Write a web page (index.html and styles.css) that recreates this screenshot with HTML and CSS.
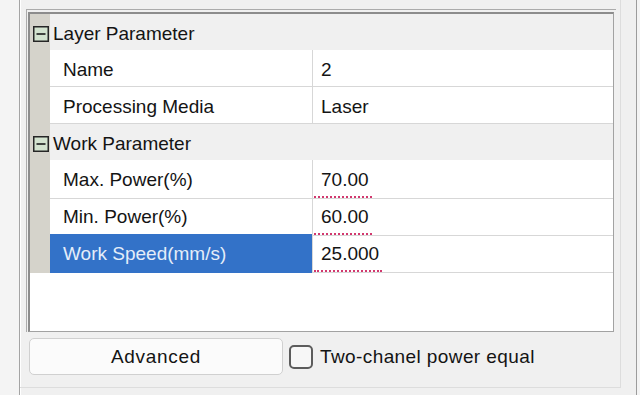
FILE: index.html
```html
<!DOCTYPE html>
<html lang="en">
<head>
    <meta charset="UTF-8">
    <title>Layer Parameter</title>
    <link rel="stylesheet" href="styles.css">
</head>
<body>
    <div class="window">
        <div class="group">
            <div class="frame">
                <div class="grid">
                    <div class="row head">
                        <span class="gutter">
                            <svg class="toggle" width="16" height="16" viewBox="0 0 16 16">
                                <rect x="0.75" y="0.75" width="14.5" height="14.5" fill="#d3e3cf" stroke="#262626" stroke-width="1.5"/>
                                <line x1="3.5" y1="8" x2="12.5" y2="8" stroke="#1a1a1a" stroke-width="1.6"/>
                            </svg>
                        </span>
                        <span class="cat">Layer Parameter</span>
                    </div>
                    <div class="row">
                        <span class="gutter"></span>
                        <span class="key">Name</span>
                        <span class="val">2</span>
                    </div>
                    <div class="row">
                        <span class="gutter"></span>
                        <span class="key">Processing Media</span>
                        <span class="val">Laser</span>
                    </div>
                    <div class="row head">
                        <span class="gutter">
                            <svg class="toggle" width="16" height="16" viewBox="0 0 16 16">
                                <rect x="0.75" y="0.75" width="14.5" height="14.5" fill="#d3e3cf" stroke="#262626" stroke-width="1.5"/>
                                <line x1="3.5" y1="8" x2="12.5" y2="8" stroke="#1a1a1a" stroke-width="1.6"/>
                            </svg>
                        </span>
                        <span class="cat">Work Parameter</span>
                    </div>
                    <div class="row">
                        <span class="gutter"></span>
                        <span class="key">Max. Power(%)</span>
                        <span class="val"><span class="spell">70.00</span></span>
                    </div>
                    <div class="row">
                        <span class="gutter"></span>
                        <span class="key">Min. Power(%)</span>
                        <span class="val"><span class="spell">60.00</span></span>
                    </div>
                    <div class="row selected">
                        <span class="gutter"></span>
                        <span class="key">Work Speed(mm/s)</span>
                        <span class="val"><span class="spell">25.000</span></span>
                    </div>
                    <div class="rest"></div>
                </div>
            </div>
            <div class="actions">
                <button class="btn" type="button">Advanced</button>
                <label class="check"><span class="box"></span>Two-chanel power equal</label>
            </div>
        </div>
    </div>
</body>
</html>
```

FILE: styles.css
```css
body {
    margin: 0;
    width: 640px;
    height: 395px;
    overflow: hidden;
    background-color: #f4f4f4;
    font-family: "Liberation Sans", Arial, sans-serif;
    font-size: 19px;
    color: #141414;
}

.window {
    margin-left: 19px;
    width: 618px;
    height: 395px;
    box-sizing: border-box;
    border-left: 1px solid #a4a4a4;
    border-right: 1px solid #9c9c9c;
    box-shadow: inset 1px 0 #ffffff;
    background-color: #f0f0f0;
}

.group {
    width: 601px;
    height: 388px;
    box-sizing: border-box;
    padding: 9px 0 0 6px;
    border-right: 1px solid #dddddd;
    border-bottom: 1px solid #dddddd;
}

.frame {
    width: 588px;
    padding: 2px 0 0 1px;
    border-top: 1px solid #ababab;
    border-left: 1px solid #ababab;
}

.grid {
    display: flex;
    flex-direction: column;
    width: 583px;
    height: 317px;
    background-color: #ffffff;
    border: 1px solid #a2a2a2;
    border-top: 2px solid #8c8c8c;
    border-left: 2px solid #8c8c8c;
}

.row {
    display: grid;
    grid-template-columns: 20px 263px 300px;
    height: 37px;
}

.row.head {
    grid-template-columns: 20px 563px;
    height: 36px;
}

.gutter {
    background-color: #d5d3cb;
}

.toggle {
    display: block;
    margin: 12px 0 0 3px;
}

.cat,
.key,
.val {
    box-sizing: border-box;
    padding-top: 3px;
    line-height: 33px;
    white-space: nowrap;
}

.cat {
    padding-left: 3px;
    background-color: #f0f0f0;
}

.key {
    padding-left: 13px;
    border-right: 1px solid #d7d7d7;
    border-bottom: 1px solid #d7d7d7;
}

.val {
    display: flex;
    padding-left: 8px;
    border-bottom: 1px solid #d7d7d7;
}

.spell {
    box-sizing: border-box;
    height: 35px;
    margin-left: -7px;
    padding: 0 3px 0 7px;
    border-bottom: 2px dotted #d2386e;
}

.row.selected .key {
    background-color: #3372c8;
    color: #e4edf9;
    border-bottom: none;
}

.rest {
    flex: 1;
}

.actions {
    display: flex;
    align-items: center;
    margin-top: 6px;
    padding-left: 3px;
}

.btn {
    width: 254px;
    height: 37px;
    background-color: #fbfbfb;
    border: 1px solid #d0d0d0;
    border-radius: 5px;
    font-family: inherit;
    font-size: 19px;
    letter-spacing: 0.7px;
    color: #141414;
    padding: 0;
}

.check {
    display: flex;
    align-items: center;
    margin-left: 6px;
    letter-spacing: 0.4px;
}

.box {
    width: 24px;
    height: 24px;
    box-sizing: border-box;
    margin-right: 7px;
    border: 2px solid #5c5c5c;
    border-radius: 5px;
    background-color: #f7f7f7;
}
```
